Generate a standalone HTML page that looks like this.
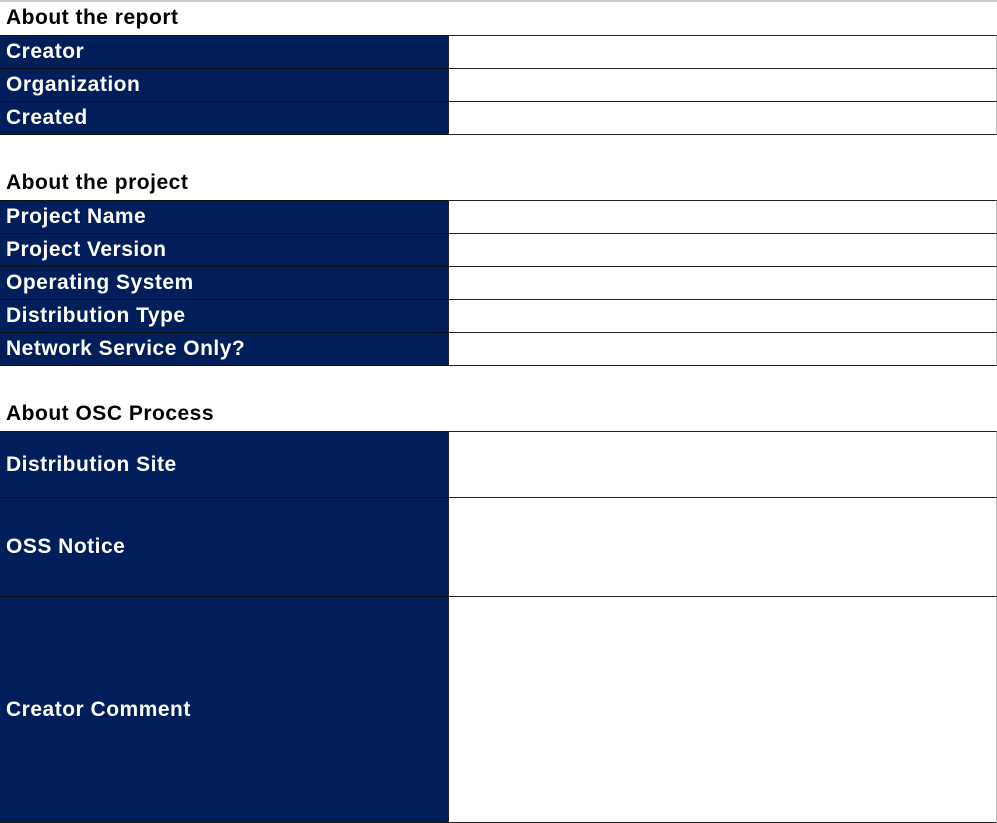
<!DOCTYPE html>
<html><head><meta charset="utf-8"><style>
*{margin:0;padding:0;box-sizing:border-box}
body{width:997px;height:823px;background:#fff;position:relative;overflow:hidden;font-family:"Liberation Sans","Noto Sans CJK KR",sans-serif;font-weight:bold;font-size:21px;letter-spacing:0.5px}
.t{position:absolute;left:0;width:449px;background:#001E5A;color:#fff;padding-left:6px;display:flex;align-items:center;border-top:1px solid #111;border-bottom:1px solid #111;border-right:1px solid #111}
.v{position:absolute;left:448px;width:549px;background:#fff;border:1px solid #222;border-right:1px solid #bbb}
.h{position:absolute;left:6px;color:#000}
.topline{position:absolute;left:0;top:0;width:997px;height:2px;background:#ccc}
</style></head><body>
<div class="topline"></div>
<div class="h" style="top:6px">About the report</div>
<div class="t" style="top:35px;height:34px">Creator</div><div class="v" style="top:35px;height:34px"></div>
<div class="t" style="top:68px;height:34px">Organization</div><div class="v" style="top:68px;height:34px"></div>
<div class="t" style="top:101px;height:34px">Created</div><div class="v" style="top:101px;height:34px"></div>
<div class="h" style="top:171px">About the project</div>
<div class="t" style="top:200px;height:34px">Project Name</div><div class="v" style="top:200px;height:34px"></div>
<div class="t" style="top:233px;height:34px">Project Version</div><div class="v" style="top:233px;height:34px"></div>
<div class="t" style="top:266px;height:34px">Operating System</div><div class="v" style="top:266px;height:34px"></div>
<div class="t" style="top:299px;height:34px">Distribution Type</div><div class="v" style="top:299px;height:34px"></div>
<div class="t" style="top:332px;height:34px">Network Service Only?</div><div class="v" style="top:332px;height:34px"></div>
<div class="h" style="top:402px">About OSC Process</div>
<div class="t" style="top:431px;height:67px">Distribution Site</div><div class="v" style="top:431px;height:67px"></div>
<div class="t" style="top:497px;height:100px">OSS Notice</div><div class="v" style="top:497px;height:100px"></div>
<div class="t" style="top:596px;height:227px">Creator Comment</div><div class="v" style="top:596px;height:227px"></div>
</body></html>
